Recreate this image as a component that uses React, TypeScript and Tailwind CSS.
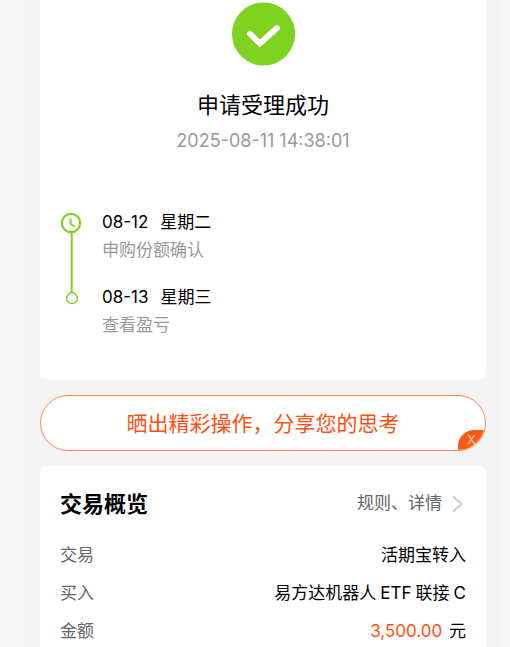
import React from "react";

const steps = [
  { date: "08-12", day: "星期二", note: "申购份额确认" },
  { date: "08-13", day: "星期三", note: "查看盈亏" },
];

function SuccessIcon() {
  return (
    <svg className="mt-0.5 size-16" viewBox="0 0 64 64" fill="none" aria-hidden="true">
      <circle cx="32.500" cy="32" r="31.6" fill="#7ed321" />
      <path d="M19 31.8 28.8 41.500 46 26" stroke="#fff" strokeWidth="5.8" strokeLinecap="round" strokeLinejoin="miter" />
    </svg>
  );
}

function TimelineRail() {
  return (
    <svg className="mt-3 h-[94px] w-[22px] shrink-0" viewBox="0 0 22 94" fill="none" stroke="#7ed321" aria-hidden="true">
      <circle cx="11" cy="11" r="9.2" strokeWidth="2.2" />
      <path d="M10.5 6.5v5.3l4.5 2.7" strokeWidth="2" />
      <path d="M11.7 20.5v60" strokeWidth="2" />
      <circle cx="12" cy="86.2" r="5.4" strokeWidth="1.4" />
    </svg>
  );
}

function Row({ label, children }: { label: string; children: React.ReactNode }) {
  return (
    <div className="flex h-[38px] items-center justify-between">
      <dt className="text-[#666]">{label}</dt>
      <dd>{children}</dd>
    </div>
  );
}

export default function App() {
  return (
    <div className="h-screen overflow-hidden bg-[#f7f7f7] pr-[9px] pl-[25px] font-[Inter,'Noto_Sans_CJK_SC',sans-serif] text-black">
      <main className="flex min-h-full flex-col gap-[15px] bg-[#f4f4f4] px-[15px]">
        <section className="rounded-b-lg bg-white px-5 pb-[41px]">
          <div className="flex flex-col items-center">
            <SuccessIcon />
            <h1 className="mt-[23px] text-[22px] leading-8">申请受理成功</h1>
            <time className="mt-1.5 text-lg leading-7 text-[#999]">2025-08-11 14:38:01</time>
          </div>
          <div className="mt-[45px] flex gap-5">
            <TimelineRail />
            <ol className="flex flex-col gap-[19px] pt-2">
              {steps.map((step) => (
                <li key={step.date} className="text-[17px] leading-7">
                  <p className="flex gap-3">
                    <span>{step.date}</span>
                    <span>{step.day}</span>
                  </p>
                  <p className="text-[#999]">{step.note}</p>
                </li>
              ))}
            </ol>
          </div>
        </section>

        <div className="relative h-14 shrink-0 overflow-hidden rounded-full border border-[#ff8753] bg-white">
          <button type="button" className="size-full pt-0.5 text-[21px] text-[#ff4f12]">
            晒出精彩操作，分享您的思考
          </button>
          <button
            type="button"
            aria-label="关闭"
            className="absolute right-0 bottom-0 flex h-5 w-[27px] items-center justify-center rounded-tl-2xl bg-[#ff5a14] text-xs font-light text-white"
          >
            X
          </button>
        </div>

        <section className="flex-1 rounded-t-lg bg-white px-5 pt-5">
          <div className="flex h-9 items-center justify-between">
            <h2 className="text-[22px] font-bold">交易概览</h2>
            <button type="button" className="flex items-center gap-2 text-[17px] text-[#666]">
              规则、详情
              <svg className="h-[18px] w-4" viewBox="0 0 16 18" fill="none" stroke="#ccc" strokeWidth="2" aria-hidden="true">
                <path d="M3 1.5 11.500 9 3 16.500" />
              </svg>
            </button>
          </div>
          <dl className="mt-[15px] text-[17px]">
            <Row label="交易">活期宝转入</Row>
            <Row label="买入">
              易方达机器人<span className="mx-1">ETF</span>联接<span className="ml-1">C</span>
            </Row>
            <Row label="金额">
              <span className="mr-0.5 text-[#ff4f12]">3,500.00</span> 元
            </Row>
          </dl>
        </section>
      </main>
    </div>
  );
}
